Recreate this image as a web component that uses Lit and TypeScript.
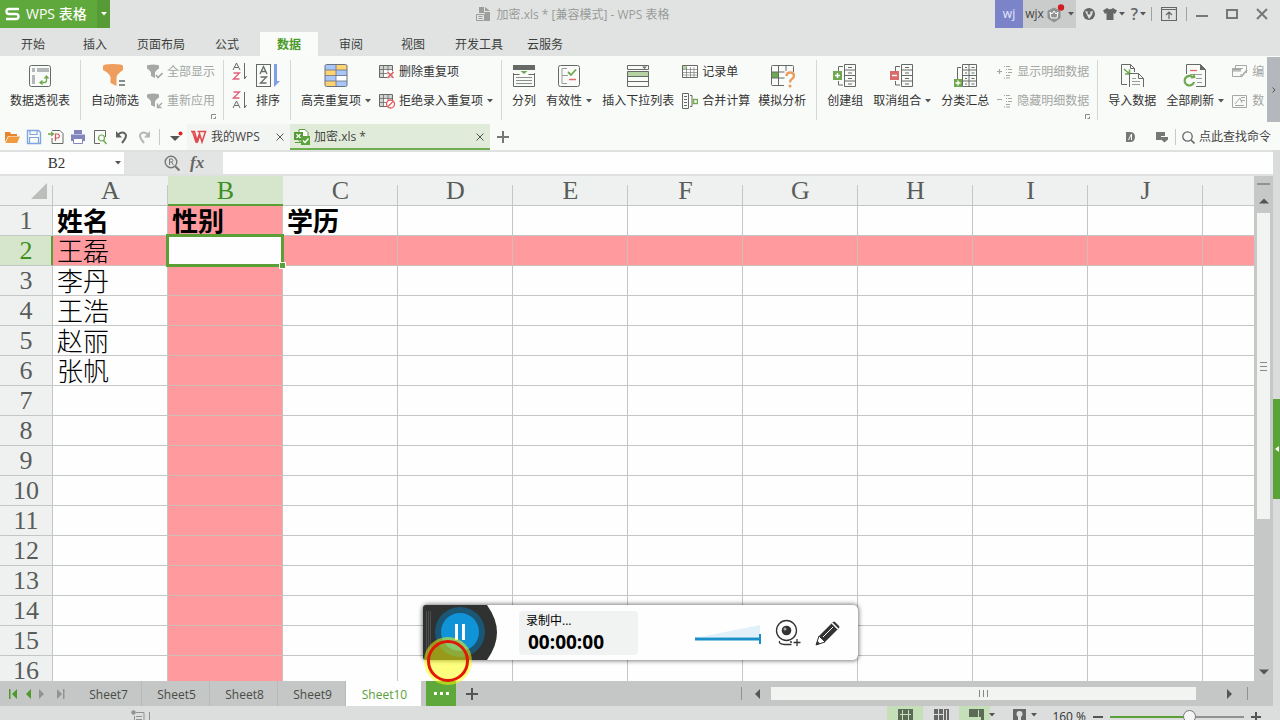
import { LitElement, html, css, svg, nothing, type TemplateResult } from "lit";
import { customElement, property } from "lit/decorators.js";
import { classMap } from "lit/directives/class-map.js";

const icon = (w: number, h: number, body: unknown) =>
  html`<svg width=${w} height=${h} viewBox="0 0 ${w} ${h}" fill="none" aria-hidden="true">${body}</svg>`;

const G = "#6fa84f";
const D = "#666a66";

const caret = () => icon(6, 4, svg`<path d="M0 0h6L3 3.5z" fill="#555"/>`);

/* ---------- large ribbon icons (26 x 26) ---------- */
const big: Record<string, TemplateResult> = {
  pivot: icon(26, 26, svg`<rect x="2.5" y="2.5" width="21" height="21" rx="2" stroke="${D}"/>
    <path d="M5 5h3v4H5zM10 5h12v4H10zM5 12h3v9H5z" fill="#b4b8b8"/>
    <path d="M14 19.500h3.500q2 0 2-2V14M15.500 17.500l-2.500 2 2.500 2M17.500 15.500l2-2.500 2 2.500" stroke="${G}" stroke-width="1.300"/>`),
  filter: icon(26, 26, svg`<path d="M1 3q0-2 10-2t10 2v4q-6 4-6.500 7v9l-6-3v-6Q7 10 1 7z" fill="#ee9d5c"/>
    <path d="M17 18h6M17 22h6" stroke="${D}" stroke-width="1.600"/>`),
  sort: icon(26, 26, svg`<rect x="1.500" y="1.500" width="14" height="22" stroke="${D}"/>
    <path d="M5 11l3.500-7.500L12 11M6.300 8.500h4.500M5.500 14h6l-6 6h6" stroke="${D}" stroke-width="1.300"/>
    <path d="M19 1h3v17h3l-6 6z" fill="#7f9fe4"/>`),
  highlight: icon(26, 26, svg`<rect x="2" y="1.500" width="22" height="22" rx="1.500" fill="#fff"/>
    <path d="M13 2h11v5H13zM2 7h11v6H2zM2 18h11v5H2z" fill="#ffd272"/>
    <path d="M2 2h11v5H2zM13 7h11v6H13zM2 13h11v5H2zM13 18h11v5H13z" fill="#a9c6fb"/>
    <rect x="2" y="1.500" width="22" height="22" rx="1.500" stroke="#6a7280"/>
    <path d="M2 7h22M2 12.500h22M2 18h22M13 2v22" stroke="#6a7280" stroke-width=".8"/>`),
  split: icon(26, 26, svg`<path d="M2 2h22v5H2z" fill="${D}"/><path d="M9.500 8h7L13 11z" fill="${G}"/>
    <path d="M2.500 10v13.500h21V10M2.500 11.500h6M17.500 11.500h6" stroke="${D}"/>
    <path d="M5 14.500h16M5 17.500h16M5 20.500h16" stroke="#8c908c"/>`),
  valid: icon(26, 26, svg`<rect x="2.500" y="2.500" width="21" height="21" rx="2" stroke="${D}"/>
    <path d="M11 5.500H6v15h5M6 12.500h6" stroke="#9a9e9a"/><path d="M12 9l3 3 5-5.500" stroke="${G}" stroke-width="1.800"/>
    <path d="M13 16.500h7" stroke="#e06a6a" stroke-width="1.500"/>`),
  dropList: icon(26, 26, svg`<path d="M2.500 2.500h21v4h-21z" stroke="${D}"/><path d="M17 3.500h5L19.500 6z" fill="${D}"/>
    <path d="M2 8.500h22v5H2z" fill="#b5d3a0"/><path d="M2.500 8.500h21v15h-21zM2.500 13.500h21M2.500 18.500h21" stroke="${D}"/>`),
  whatIf: icon(26, 26, svg`<path d="M2 9h8v6H2z" fill="${G}"/>
    <path d="M15 22.500H3.500q-1 0-1-1v-18q0-1 1-1h20q1 0 1 1V9M2.500 9h13M2.500 15h13M9.500 3v20M17 3v5" stroke="${D}"/>
    <path d="M17.500 13q0-3.500 3.700-3.500t3.700 3.300q0 2-2 3.200t-1.800 3.500" stroke="#eb9d5f" stroke-width="2.400"/><circle cx="21" cy="23" r="1.600" fill="#eb9d5f"/>`),
  group: icon(26, 26, svg`<path d="M12.500 1.500h11v22h-11zM12.500 7h11M12.500 12.500h11M12.500 18h11M16 4.500h4M16 10h4M16 15.500h4M16 21h4M11 3.500H6.500v5M11 22H6.500v-4" stroke="${D}"/>
    <path d="M1 8h9v9H1z" fill="${G}"/><path d="M3 12.500h5M5.500 10v5" stroke="#fff" stroke-width="1.400"/>`),
  ungroup: icon(26, 26, svg`<path d="M12.500 1.500h11v22h-11zM12.500 7h11M12.500 12.500h11M12.500 18h11M16 4.500h4M16 10h4M16 15.500h4M16 21h4M11 3.500H6.500v5M11 22H6.500v-4" stroke="${D}"/>
    <path d="M1 8h9v9H1z" fill="#d96b6b"/><path d="M3 12.500h5" stroke="#fff" stroke-width="1.400"/>`),
  subtotal: icon(26, 26, svg`<path d="M10.500 1.500h14v22h-14zM17 2v21M10.500 7h14M10.500 12.500h14M10.500 18h14M13 4.500h2M19.500 4.500h3M13 10h2M19.500 10h3M13 15.500h2M19.500 15.500h3M13 21h2M19.500 21h3M9 4.500H5.500V16" stroke="${D}"/>
    <path d="M2 16h8v8H2z" fill="${G}"/><path d="M3.500 20h5M6 17.500v5" stroke="#fff" stroke-width="1.300"/>`),
  importData: icon(26, 26, svg`<path d="M2.500 21.500v-20h9l4 4V9M11.500 1.500v4h4M8 21.500H2.500" stroke="${D}"/>
    <path d="M5 6l5 4.500M10.500 6.500V11H6" stroke="${G}" stroke-width="1.600"/>
    <path d="M10.500 24V10.500h9l5 5V24M19.500 10.500v5h5" stroke="${D}"/><path d="M13 15.500h4M13 18.500h8M13 21.500h8" stroke="#9a9e9a"/>`),
  refresh: icon(26, 26, svg`<path d="M4.500 11V1.500h14l5 5v17H14" stroke="${D}"/><path d="M18 1v6h6z" fill="${D}"/>
    <path d="M8 7.500h7" stroke="#e06a6a" stroke-width="1.300"/><path d="M8 11.500h12M14 15.500h6M15 19.500h5" stroke="#9a9e9a"/>
    <path d="M11 14.500A4.800 4.800 0 1 0 12 19" stroke="${G}" stroke-width="2.200"/><path d="M8.500 15.500l5-.5-1-4.500z" fill="${G}"/>`),
};

/* ---------- small ribbon icons (16 x 16) ---------- */
const funnel = svg`<path d="M0 2q0-1.500 6-1.500T12 2v2.500Q8 7 8 9v5l-4-2V9Q4 7 0 4.500z" fill="#a5a8a5"/>`;
const miniTable = svg`<path d="M.5 1.500h13v12H.5z" fill="#fff" stroke="${D}"/><path d="M1 2h12v3H1zM1 5h3v8H1z" fill="#d0d3d0"/>
  <path d="M.5 5.500h13M.5 9.500h13M4.500 2v11M9 2v11" stroke="${D}" stroke-width=".8"/>`;
const small: Record<string, TemplateResult> = {
  showAll: icon(16, 16, svg`${funnel}<path d="M9 11l2 2.500 4.500-4.500" stroke="#a5a8a5" stroke-width="1.600"/>`),
  reapply: icon(16, 16, svg`${funnel}<path d="M15 10l-4 4M10.500 10.500v4h4" stroke="#a5a8a5" stroke-width="1.400"/>`),
  asc: icon(16, 20, svg`<path d="M1 8l3.500-7L8 8M2.500 5.500h4" stroke="${D}"/><path d="M1.500 11h6l-6 6h6" stroke="#e0607c" stroke-width="1.300"/>
    <path d="M12.500 1v16M12.500 17l2-3" stroke="${D}"/>`),
  desc: icon(16, 20, svg`<path d="M1.500 1h6l-6 6h6" stroke="#e0607c" stroke-width="1.300"/><path d="M1 17l3.500-7L8 17M2.500 14.500h4" stroke="${D}"/>
    <path d="M12.500 1v16M12.500 17l2-3" stroke="${D}"/>`),
  dedupe: icon(16, 16, svg`${miniTable}<path d="M8 7h8v8H8z" fill="#fff" opacity=".7"/><path d="M8.500 8l6 6M14.500 8l-6 6" stroke="#df5b5b" stroke-width="1.400"/>`),
  reject: icon(16, 16, svg`${miniTable}<circle cx="11.500" cy="11" r="4" fill="#fff" stroke="#df5b5b" stroke-width="1.300"/><path d="M9 13.500l5-5" stroke="#df5b5b" stroke-width="1.300"/>`),
  form: icon(16, 16, svg`<path d="M.5 1.500h15v12H.5z" fill="#fff" stroke="${D}"/><path d="M1 2h4v3H1z" fill="#b5d3a0"/>
    <path d="M.5 5.500h15M.5 8.500h15M.5 11h15M4.500 3v10M8.500 3v10M12 3v10" stroke="${D}" stroke-width=".6"/>`),
  consolidate: icon(16, 16, svg`<path d="M.5.5h6v15h-6zM2 3.500h3M2 6.500h3M2 9.500h3M2 12.500h3M8 2.500h2v11H8" stroke="${D}"/>
    <rect x="11.500" y="6.500" width="4" height="4" stroke="${G}" stroke-width="1.400"/>`),
  expand: icon(16, 16, svg`<path d="M0 7.500h5M2.500 5v5M9 2.500h4M9 5.500h1M11 5.500h4M9 8.500h1M11 8.500h4M9 11.500h4M9 14h4M7 2.500h1M7 14h1" stroke="#a5a8a5" stroke-width="1.200"/>`),
  collapse: icon(16, 16, svg`<path d="M0 6.500h5M9 2.500h4M9 5.500h1M11 5.500h4M9 8.500h1M11 8.500h4M9 11.500h4M9 14h4M7 2.500h1M7 14h1" stroke="#a5a8a5" stroke-width="1.200"/>`),
  edit: icon(16, 16, svg`<path d="M3.500 4V1.500h11V9M11 4.500H.5v8H9V10M.5 7H9" stroke="#a5a8a5"/><path d="M.5 4.500H9v2H.5z" fill="#a5a8a5"/><path d="M15 6l-6 7" stroke="#a5a8a5" stroke-width="1.600"/>`),
  props: icon(16, 16, svg`<path d="M.5 2.500h14v12H.5zM3 11l5-6 2 5M9 4.500h4M9 7.500h4M3 12.500h9" stroke="#a5a8a5"/>`),
};

/* ---------- quick access toolbar ---------- */
const quick: [string, TemplateResult][] = [
  ["打开", icon(16, 16, svg`<path d="M1 13V3h5l1 2h6v2H4L1 13z" fill="#e8842c"/><path d="M4.500 7.500H16L13 14H1.500z" fill="#f19a3e"/>`)],
  ["保存", icon(16, 16, svg`<path d="M1.500 1.500h11l2 2v11h-13z" stroke="#7fa5e0" stroke-width="1.400"/><path d="M4 1.500h7v4H4zM3.500 8.500h9v6h-9z" stroke="#7fa5e0" stroke-width="1.200"/>`)],
  ["输出为PDF", icon(16, 16, svg`<path d="M4 1.500h8l3 3v10H4V9" stroke="${D}"/><path d="M7.500 12V5h2.500q3 2 0 4H6.500" stroke="#d85a62" stroke-width="1.200"/><path d="M0 5h5M3 3l2.500 2L3 7" stroke="${G}" stroke-width="1.300"/>`)],
  ["打印", icon(16, 16, svg`<path d="M4 1h8v4H4zM1 5.500h14V12H1z" fill="#8286bd"/><path d="M3.500 9.500h9v5h-9z" fill="#fff" stroke="#8286bd"/>`)],
  ["打印预览", icon(16, 16, svg`<path d="M8 14.500H2.500v-13h11V8" stroke="${D}"/><circle cx="9.500" cy="9" r="3" stroke="${G}" stroke-width="1.200"/><path d="M11.500 11.500l3 3.500" stroke="${G}" stroke-width="1.400"/>`)],
  ["撤销", icon(16, 16, svg`<path d="M4 5.500Q8 2 11 4.500T8 14" stroke="#5f6360" stroke-width="2"/><path d="M2 2v6.500h6z" fill="#5f6360"/>`)],
  ["恢复", icon(16, 16, svg`<path d="M12 5.500Q8 2 5 4.500T8 14" stroke="#b4b7b4" stroke-width="2"/><path d="M14 2v6.500H8z" fill="#b4b7b4"/>`)],
];

const closeX = icon(8, 8, svg`<path d="M.5.500l7 7M7.500.500l-7 7" stroke="#555"/>`);
const plus = (s: number, c: string) => icon(s, s, svg`<path d="M0 ${s / 2}h${s}M${s / 2} 0v${s}" stroke="${c}" stroke-width="2"/>`);
const arrow = (d: string, c: string) => icon(10, 10, svg`<path d="${d}" fill="${c}"/>`);

type Item =
  | { kind: "big"; icon: string; label: string; menu?: boolean }
  | { kind: "small"; rows: { icon: string; label?: string; menu?: boolean; off?: boolean }[] };

const ribbon: { launcher?: boolean; items: Item[] }[] = [
  { items: [{ kind: "big", icon: "pivot", label: "数据透视表" }] },
  {
    launcher: true,
    items: [
      { kind: "big", icon: "filter", label: "自动筛选" },
      { kind: "small", rows: [{ icon: "showAll", label: "全部显示", off: true }, { icon: "reapply", label: "重新应用", off: true }] },
    ],
  },
  {
    items: [
      { kind: "small", rows: [{ icon: "asc" }, { icon: "desc" }] },
      { kind: "big", icon: "sort", label: "排序" },
    ],
  },
  {
    items: [
      { kind: "big", icon: "highlight", label: "高亮重复项", menu: true },
      { kind: "small", rows: [{ icon: "dedupe", label: "删除重复项" }, { icon: "reject", label: "拒绝录入重复项", menu: true }] },
    ],
  },
  {
    items: [
      { kind: "big", icon: "split", label: "分列" },
      { kind: "big", icon: "valid", label: "有效性", menu: true },
      { kind: "big", icon: "dropList", label: "插入下拉列表" },
      { kind: "small", rows: [{ icon: "form", label: "记录单" }, { icon: "consolidate", label: "合并计算" }] },
      { kind: "big", icon: "whatIf", label: "模拟分析" },
    ],
  },
  {
    launcher: true,
    items: [
      { kind: "big", icon: "group", label: "创建组" },
      { kind: "big", icon: "ungroup", label: "取消组合", menu: true },
      { kind: "big", icon: "subtotal", label: "分类汇总" },
      { kind: "small", rows: [{ icon: "expand", label: "显示明细数据", off: true }, { icon: "collapse", label: "隐藏明细数据", off: true }] },
    ],
  },
  {
    items: [
      { kind: "big", icon: "importData", label: "导入数据" },
      { kind: "big", icon: "refresh", label: "全部刷新", menu: true },
      { kind: "small", rows: [{ icon: "edit", label: "编", off: true }, { icon: "props", label: "数", off: true }] },
    ],
  },
];

const base = css`
  * { box-sizing: border-box; }
  button, input {
    font: inherit; color: inherit; background: none; border: 0; padding: 0; margin: 0; border-radius: 0;
  }
  button { display: flex; align-items: center; justify-content: center; white-space: nowrap; }
  svg { display: block; flex: none; }
`;

@customElement("title-bar")
export class TitleBar extends LitElement {
  static styles = [base, css`
    :host { display: flex; height: 28px; padding-right: 3px; }
    .brand { display: flex; background: #5fa83b; color: #fff; font-size: 14px; font-weight: 500; }
    .brand .name { gap: 6px; width: 97px; padding-left: 5px; justify-content: flex-start; }
    .brand .more { width: 13px; background: #569b35; }
    .caption { flex: 1; display: flex; align-items: center; justify-content: center; gap: 6px; padding: 1px 0 0 40px; color: #989b98; min-width: 0; white-space: nowrap; }
    .avatar { width: 28px; background: #7b84c8; color: #e6e8ff; }
    .user { width: 53px; gap: 3px; background: #cacccb; color: #444; }
    .tool { width: 25px; gap: 2px; color: #666; font-size: 16px; font-weight: 600; }
    .pin { width: 34px; }
    .win { width: 30px; }
    .bar { width: 1px; height: 14px; margin: auto 0; background: #a0a3a0; }
  `];
  render() {
    return html`
      <div class="brand">
        <button class="name">${icon(15, 14, svg`<path d="M14 2H4Q1.500 2 1.500 4.500T4 7h7q2.500 0 2.500 2.500T11 12H1" stroke="#fff" stroke-width="2.400"/>`)}WPS 表格</button>
        <button class="more" aria-label="菜单">${icon(6, 4, svg`<path d="M0 0h6L3 3.500z" fill="#fff"/>`)}</button>
      </div>
      <div class="caption">
        ${icon(15, 15, svg`<path d="M3 0h5v5h6v9H9V6H3z" fill="#9b9e9b"/><path d="M9 0l5 4H9z" fill="#9b9e9b"/><path d="M.5 7.500h8v6h-8zM2.500 9.500h4M2.500 11.500h4" stroke="#9b9e9b" fill="#e1e3e1"/>`)}
        <span>加密.xls * [兼容模式] - WPS 表格</span>
      </div>
      <button class="avatar">wj</button>
      <button class="user">wjx
        ${icon(18, 20, svg`<path d="M7 4l6 3v7l-6 4-6-4V7z" fill="#8f9290" stroke="#8f9290"/><path d="M3 8l2 2 2-3 2 3 2-2-1 6H4z" stroke="#fff"/><circle cx="14" cy="3.500" r="3.200" fill="#cf1f22"/>`)}
        ${caret()}</button>
      <button class="tool" aria-label="皮肤">${icon(14, 14, svg`<circle cx="7" cy="7" r="6" fill="#666"/><path d="M3 4l4 1 4-1-1 4-3 4-2-4z" fill="#e1e3e1"/><circle cx="7" cy="6" r="1.500" fill="#666"/>`)}</button>
      <button class="tool" aria-label="换肤">${icon(14, 12, svg`<path d="M4 0q3 2.500 6 0l4 2.500-2 3.500-1.500-1v7h-7V5L2 6 0 2.500z" fill="#666"/>`)}${caret()}</button>
      <button class="tool"><span>?</span>${caret()}</button>
      <span class="bar"></span>
      <button class="pin" aria-label="功能区">${icon(16, 14, svg`<path d="M.5.500h15v13H.5zM.5 2.500h15M8 12V5M5 8l3-3 3 3" stroke="#666" stroke-width="1.200"/>`)}</button>
      <span class="bar"></span>
      <button class="win" aria-label="最小化">${icon(12, 12, svg`<path d="M0 8h12" stroke="#777" stroke-width="2"/>`)}</button>
      <button class="win" aria-label="还原">${icon(12, 12, svg`<path d="M1 2h10v8H1z" stroke="#777" stroke-width="2"/>`)}</button>
      <button class="win" aria-label="关闭">${icon(12, 12, svg`<path d="M1 1l10 10M11 1L1 11" stroke="#777" stroke-width="2"/>`)}</button>
    `;
  }
}

@customElement("ribbon-bar")
export class RibbonBar extends LitElement {
  static styles = [base, css`
    :host { display: block; }
    .tabs { display: flex; gap: 4px; height: 28px; padding: 4px 4px 0; }
    .tab { min-width: 58px; padding: 2px 9px 0; color: #3c3f3c; }
    .tab.on { background: #fafcf9; color: #4c9a2a; font-weight: 700; }
    .panel { display: flex; height: 68px; background: #f9fbf9; overflow: hidden; }
    .groups { display: flex; flex: 1; min-width: 0; overflow: hidden; padding-top: 1px; }
    .group { position: relative; display: flex; flex: none; padding: 0 6px 0 5px; background: linear-gradient(#d5d8d5, #d5d8d5) right 3px / 1px 60px no-repeat; }
    .group:last-child { background: none; }
    .big { flex-direction: column; justify-content: flex-start; gap: 3px; padding: 6px 5px 0; color: #333; }
    .big > svg { margin: 0 -4px; }
    .line { display: flex; align-items: center; gap: 4px; line-height: 18px; }
    .col { display: flex; flex-direction: column; padding: 0 3px; }
    .small { height: 29px; gap: 4px; justify-content: flex-start; color: #333; }
    .off { color: #a3a6a3; }
    .launch { position: absolute; right: 8px; bottom: 5px; }
    .next { width: 13px; margin-top: 1px; background: #b4b8bd; height: 65px; }
  `];
  render() {
    const tabs = ["开始", "插入", "页面布局", "公式", "数据", "审阅", "视图", "开发工具", "云服务"];
    return html`
      <nav class="tabs">
        ${tabs.map((t) => html`<button class=${classMap({ tab: true, on: t === "数据" })}>${t}</button>`)}
      </nav>
      <div class="panel">
        <div class="groups">
          ${ribbon.map((g) => html`<div class="group">
            ${g.items.map((it) => it.kind === "big"
              ? html`<button class="big">${big[it.icon]}<span class="line">${it.label}${it.menu ? caret() : nothing}</span></button>`
              : html`<div class="col">${it.rows.map((r) => html`
                  <button class=${classMap({ small: true, off: !!r.off })} aria-label=${r.label ?? r.icon}>${small[r.icon]}${r.label ?? nothing}${r.menu ? caret() : nothing}</button>`)}</div>`)}
            ${g.launcher ? html`<button class="launch" aria-label="更多">${icon(5, 5, svg`<path d="M.5 5V.5H5M2.500 4.500h2v-2" stroke="#888"/>`)}</button>` : nothing}
          </div>`)}
        </div>
        <button class="next" aria-label="向右滚动">${icon(4, 6, svg`<path d="M.5.500l2.500 2.500-2.500 2.500" stroke="#555"/>`)}</button>
      </div>
    `;
  }
}

@customElement("document-bar")
export class DocumentBar extends LitElement {
  static styles = [base, css`
    :host { display: flex; height: 26px; background: #f9fbf9; color: #444; }
    .quick { display: flex; align-items: center; gap: 6px; padding: 0 7px 0 4px; }
    .bar { width: 1px; height: 16px; margin: auto 0; background: #c8cac8; }
    .more { width: 27px; padding-left: 4px; }
    .doc { display: flex; align-items: center; gap: 4px; padding: 0 6px 0 4px; background: #f3f5f3; width: 103px; }
    .doc.on { width: 200px; padding-top: 2px; background: #e0ecd9; border-bottom: 2px solid #6fae50; }
    .doc .label { flex: 1; white-space: nowrap; }
    .add { width: 26px; }
    .tools { display: flex; align-items: center; margin-left: auto; padding-right: 9px; gap: 6px; }
    .tools button { gap: 4px; }
    .tools .gap { gap: 20px; }
  `];
  render() {
    return html`
      <div class="quick">${quick.map(([n, i]) => html`<button aria-label=${n}>${i}</button>`)}</div>
      <span class="bar"></span>
      <button class="more" aria-label="自定义">${icon(14, 12, svg`<path d="M1 5h10l-5 5z" fill="#555"/><circle cx="11.500" cy="2.500" r="2" fill="#e02020"/>`)}</button>
      <div class="doc">
        ${icon(16, 14, svg`<path d="M0 1.500h3.500L6 11l2.500-7.500L11 12l3.500-10.500H6.500M1.500 1.500L5 12h1.500L9 4" stroke="#e2474c" stroke-width="1.500"/>`)}
        <span class="label">我的WPS</span><button aria-label="关闭">${closeX}</button>
      </div>
      <div class="doc on">
        ${icon(16, 16, svg`<path d="M5 .500h6l3 3V12H5z" fill="#fff" stroke="#5c9a3f"/><path d="M0 3h9v8H0z" fill="#4f9a32"/><path d="M2.500 5l4 4M6.500 5l-4 4" stroke="#fff" stroke-width="1.300"/><path d="M1 13.500h6" stroke="#5c9a3f"/><path d="M7 7h9v9H7z" fill="#5aa53b"/><path d="M9 11.500l2 2 3.500-4" stroke="#fff" stroke-width="1.500"/>`)}
        <span class="label">加密.xls *</span><button aria-label="关闭">${closeX}</button>
      </div>
      <button class="add" aria-label="新建">${plus(12, "#777")}</button>
      <div class="tools">
        <button class="gap" aria-label="窗口">${icon(10, 12, svg`<path d="M1 1h4q5 0 5 5t-5 5H1z" fill="#777"/><path d="M3.500 9L6.500 3v6" stroke="#fff"/>`)}${icon(14, 12, svg`<path d="M1 1h9v4H6v4H1z" fill="#777"/><path d="M6 6h7v2.500L9.500 11.500 6 8.500z" fill="#777"/>`)}</button>
        <span class="bar"></span>
        <button>${icon(13, 13, svg`<circle cx="5.500" cy="5.500" r="4.700" stroke="#666" stroke-width="1.300"/><path d="M9 9l3.500 3.500" stroke="#666" stroke-width="1.600"/>`)}点此查找命令</button>
      </div>
    `;
  }
}

@customElement("sheet-grid")
export class SheetGrid extends LitElement {
  @property({ type: Number }) activeRow = 2;
  @property({ type: Number }) activeCol = 1;
  static styles = [base, css`
    :host { display: flex; min-height: 0; flex: 1; }
    .view { flex: 1; min-width: 0; overflow: hidden; background: #fdfefd; }
    table { table-layout: fixed; width: 1318px; border-collapse: separate; border-spacing: 0; }
    .head { width: 53px; }
    .cell { width: 115px; }
    th, td { height: 30px; padding: 1px 0 0; white-space: nowrap; border-bottom: 1px solid #c3c6c3; }
    th { font: 400 26px/28px "Liberation Serif", serif; color: #5a5c5a; text-align: center; background: linear-gradient(#c3c6c3, #c3c6c3) right bottom / 1px 20px no-repeat #eef1ef; }
    th.row { border-right: 1px solid #c3c6c3; background: #eef1ef; }
    thead th.lit { background: #d5e6cc; color: #3f8f22; border-color: #5ba037; box-shadow: inset 0 -1px #5ba037; }
    th.row.lit { background: #d5e6cc; color: #3f8f22; border-right-color: #5ba037; box-shadow: inset -1px 0 #5ba037; }
    td { border-right: 1px solid #c3c6c3; padding-left: 4px; font-size: 26px; line-height: 28px; font-weight: 300; color: #000; }
    td.bold { font-weight: 700; }
    td.pink { background: #ff9b9f; border-color: #cfbdb6; }
    td.active { position: relative; background: #fdfefd; }
    .frame { position: absolute; inset: -2px; border: 3px solid #5ba037; }
    .frame::after { content: ""; position: absolute; right: -4px; bottom: -4px; width: 5px; height: 5px; background: #5ba037; outline: 1px solid #fff; }
    .corner { display: flex; justify-content: flex-end; padding-right: 6px; }
    .scroll { width: 19px; display: flex; flex-direction: column; align-items: center; background: #c5c8c6; padding: 7px 0 4px; }
    .splitter { width: 13px; height: 2px; background: #909390; }
    .scroll button { height: 28px; width: 19px; padding-top: 3px; }
    .scroll .down { height: 10px; margin-top: auto; padding: 0; }
    .thumb { width: 13px; flex: 0 0 62%; display: flex; align-items: center; justify-content: center; background: #f2f4f2; }
  `];
  render() {
    const cols = [..."ABCDEFGHIJ", ""];
    const data = [["姓名", "性别", "学历"], ["王磊"], ["李丹"], ["王浩"], ["赵丽"], ["张帆"]];
    return html`
      <div class="view">
        <table>
          <colgroup><col class="head" />${cols.map(() => html`<col class="cell" />`)}</colgroup>
          <thead><tr>
            <th><div class="corner">${icon(16, 16, svg`<path d="M16 0v16H0z" fill="#bbbebb"/>`)}</div></th>
            ${cols.map((c, i) => html`<th class=${classMap({ lit: i === this.activeCol })}>${c}</th>`)}
          </tr></thead>
          <tbody>
            ${Array.from({ length: 16 }, (_, r) => html`<tr>
              <th class=${classMap({ row: true, lit: r + 1 === this.activeRow })}>${r + 1}</th>
              ${cols.map((_c, i) => {
                const inRow = r + 1 === this.activeRow, inCol = i === this.activeCol;
                return html`<td class=${classMap({ bold: r === 0, pink: inRow !== inCol, active: inRow && inCol })}>${data[r]?.[i] ?? nothing}${inRow && inCol ? html`<span class="frame"></span>` : nothing}</td>`;
              })}
            </tr>`)}
          </tbody>
        </table>
      </div>
      <div class="scroll">
        <span class="splitter"></span>
        <button aria-label="向上">${arrow("M0 7.500h10L5 2.500z", "#555")}</button>
        <div class="thumb">${icon(7, 9, svg`<path d="M0 .500h7M0 4.500h7M0 8.500h7" stroke="#888"/>`)}</div>
        <button class="down" aria-label="向下">${arrow("M0 2.500h10l-5 5z", "#555")}</button>
      </div>
    `;
  }
}

@customElement("screen-recorder")
export class ScreenRecorder extends LitElement {
  static styles = [base, css`
    :host { display: flex; align-items: center; width: 435px; height: 55px; border-radius: 5px; background: #fefefe; box-shadow: 0 0 4px 1px rgba(0, 0, 0, .5); color: #000; padding-right: 17px; }
    .time { width: 119px; height: 44px; margin-left: 22px; padding: 1px 7px; border-radius: 4px; background: #f1f2f2; line-height: 18px; }
    .clock { font-size: 19px; font-weight: 700; line-height: 24px; padding-left: 2px; }
    .right { display: flex; align-items: center; gap: 14px; margin-left: auto; }
    .pointer { position: absolute; left: 1px; top: 32px; width: 48px; height: 48px; border-radius: 50%; background: rgba(255, 255, 0, .5); padding: 3px; }
    .ring { height: 42px; border-radius: 50%; border: 3px solid #e01808; }
  `];
  render() {
    return html`
      <button aria-label="暂停">${icon(74, 55, svg`<path d="M3 0h61q10 14 10 27.500T64 55H3Q0 55 0 52V3Q0 0 3 0z" fill="#303232"/>
        <path d="M3.500 6v44M5.500 6v44M7.500 6v44" stroke="#555" stroke-width=".8"/>
        <circle cx="37" cy="27" r="25" fill="#1b5674"/><circle cx="37" cy="27" r="19" fill="#1193d8"/>
        <path d="M33.500 19v16M40.500 19v16" stroke="#fff" stroke-width="3"/>`)}</button>
      <div class="time"><div>录制中...</div><div class="clock">00:00:00</div></div>
      <div class="right">
        ${icon(66, 24, svg`<path d="M0 17L65 4v12H0z" fill="#e2f0f9"/><path d="M0 18h65" stroke="#1a8fc9" stroke-width="3"/><path d="M65 13v10" stroke="#1a8fc9" stroke-width="2"/>`)}
        <button aria-label="摄像头">${icon(26, 28, svg`<circle cx="11.500" cy="11.500" r="10" stroke="#333" stroke-width="1.300"/><circle cx="11.500" cy="11.500" r="4.800" fill="#333"/><circle cx="10" cy="10" r="1.500" fill="#aaa"/><path d="M4.500 22q-1 3 5 3.500h7M15 23l2 0M18.500 23.500h7M22 20v7" stroke="#333" stroke-width="1.300"/>`)}</button>
        <button aria-label="画笔">${icon(26, 26, svg`<path d="M1 25l3-9L18 2q1-1 2 0l4 4q1 1 0 2L10 22z" fill="#333"/><path d="M1 25l3-9 6 6z" fill="#fff" stroke="#333"/><path d="M17 3l6 6" stroke="#fff" stroke-width="1.500"/><path d="M8 17L18 7" stroke="#fff"/><path d="M1 25l1.500-4 2.500 2.500z" fill="#333"/>`)}</button>
      </div>
      <div class="pointer"><div class="ring"></div></div>
    `;
  }
}

@customElement("app-root")
export class AppRoot extends LitElement {
  static styles = [base, css`
    :host { display: flex; flex-direction: column; position: relative; height: 100vh; min-height: 480px; overflow: hidden; background: #e1e3e2; color: #333; font: 12px/18px "Open Sans", "Noto Sans CJK SC", sans-serif; }
    .body { flex: 1; display: flex; min-height: 0; }
    .work { flex: 1; min-width: 0; display: flex; flex-direction: column; }
    .formula { display: flex; height: 26px; padding: 2px 0; background: #dfe1e0; }
    .namebox { display: flex; align-items: center; width: 124px; background: #fdfefd; padding-right: 3px; }
    .namebox input { flex: 1; min-width: 0; height: 100%; padding: 1px 2px 0 0; text-align: center; font: 15px/18px "Liberation Serif", serif; }
    .fx { display: flex; align-items: center; gap: 10px; width: 99px; padding-left: 40px; background: #e3e5e4; font: italic 700 17px/20px "Liberation Serif", serif; color: #666; }
    .entry { flex: 1; background: #fdfefd; }
    .entry input { width: 100%; height: 100%; }
    .side { width: 7px; background: #dadcdb; display: flex; flex-direction: column; justify-content: center; }
    .side button { height: 100px; margin-top: 42px; background: #5aa336; }
    .sheets { display: flex; height: 25px; background: #c4c7c5; }
    .nav { display: flex; align-items: center; width: 74px; padding-left: 8px; }
    .nav .first { margin-right: 7px; }
    .nav .next { margin: 0 9px 0 2px; }
    .sheet { width: 68px; padding: 2px 0 0 2px; border-right: 1px solid #b7bab8; color: #484b48; }
    .sheet.on { width: 75px; background: #fdfefd; color: #5a9e3a; border: 0; }
    .list { width: 30px; margin-left: 5px; background: #5fa83b; }
    .add { width: 32px; }
    .hscroll { display: flex; align-items: center; width: 42%; margin-left: auto; padding: 0 25px 0 3px; }
    .hscroll .bar { width: 1px; height: 13px; background: #8f9290; }
    .hscroll .track { flex: 1; height: 13px; }
    .hscroll .thumb { width: 95%; height: 13px; display: flex; align-items: center; justify-content: center; background: #f2f4f2; }
    .arrow { width: 29px; }
    .arrow.right { padding-right: 7px; }
    .status { display: flex; align-items: flex-start; height: 14px; overflow: hidden; background: #dcdedd; padding: 0 19px 0 131px; }
    .mark { margin-right: auto; padding-top: 4px; }
    .modes { display: flex; }
    .mode { height: 14px; width: 36px; gap: 5px; padding-top: 4px; }
    .mode.menu { width: 44px; justify-content: flex-start; padding-left: 10px; }
    .mode.on { background: linear-gradient(#c5dfb8, #c5dfb8) left / 36px 100% no-repeat; }
    .mode.menu.on { background-size: 31px 100%; }
    .zoom { display: flex; align-items: center; gap: 7px; height: 21px; }
    .zoom label { padding-left: 5px; }
    .zoom input { appearance: none; width: 134px; height: 14px; background: linear-gradient(90deg, #5ba037 58%, #8f9290 58%) center / 100% 2px no-repeat; }
    .zoom input::-webkit-slider-thumb { appearance: none; width: 13px; height: 13px; border-radius: 50%; background: #f4f5f4; border: 1px solid #777; }
    screen-recorder { position: absolute; left: 423px; bottom: 60px; }
  `];
  render() {
    const g = "#4b9a2a", o = "#909390";
    return html`
      <title-bar></title-bar>
      <ribbon-bar></ribbon-bar>
      <document-bar></document-bar>
      <div class="body">
        <main class="work">
          <div class="formula">
            <div class="namebox"><input aria-label="名称框" value="B2" />${caret()}</div>
            <div class="fx">${icon(16, 16, svg`<circle cx="7" cy="7" r="5.800" stroke="#777" stroke-width="1.400"/><path d="M11 11l4.500 4.500" stroke="#777" stroke-width="2.200"/><path d="M5.500 10V4h2.500q2 1.500 0 3H5.500M7.500 7l2 3" stroke="#777"/>`)}<span>fx</span></div>
            <div class="entry"><input aria-label="编辑栏" /></div>
          </div>
          <sheet-grid></sheet-grid>
          <div class="sheets">
            <div class="nav">
              <button class="first" aria-label="第一张">${arrow("M1 0h1.500v10H1zM9 0v10L4 5z", g)}</button>
              <button aria-label="前一张">${arrow("M6 0v10L1 5z", g)}</button>
              <button class="next" aria-label="下一张">${arrow("M2 0v10l5-5z", o)}</button>
              <button aria-label="最后一张">${arrow("M1 0v10l5-5zM7 0h1.500v10H7z", o)}</button>
            </div>
            ${["Sheet7", "Sheet5", "Sheet8", "Sheet9", "Sheet10"].map((s) => html`<button class=${classMap({ sheet: true, on: s === "Sheet10" })}>${s}</button>`)}
            <button class="list" aria-label="工作表列表">${icon(15, 3, svg`<path d="M0 0h3v3H0zM6 0h3v3H6zM12 0h3v3h-3z" fill="#fff"/>`)}</button>
            <button class="add" aria-label="新建工作表">${plus(12, "#555")}</button>
            <div class="hscroll">
              <span class="bar"></span>
              <button class="arrow" aria-label="向左">${arrow("M8 0v10L3 5z", "#555")}</button>
              <div class="track"><div class="thumb">${icon(9, 7, svg`<path d="M.500 0v7M4.500 0v7M8.500 0v7" stroke="#888"/>`)}</div></div>
              <button class="arrow right" aria-label="向右">${arrow("M3 0v10l5-5z", "#555")}</button>
              <span class="bar"></span>
            </div>
          </div>
        </main>
        <aside class="side"><button aria-label="展开窗格">${icon(4, 6, svg`<path d="M4 0v6L0 3z" fill="#fff"/>`)}</button></aside>
      </div>
      <footer class="status">
        <span class="mark">${icon(20, 16, svg`<circle cx="2.500" cy="2.500" r="2.200" fill="#909390"/><path d="M5 2.500h8V16M3.500 6v10M5 6.500h6M5 9.500h6M18.500 2v14" stroke="#909390"/>`)}</span>
        <div class="modes">
          <button class="mode on" aria-label="普通视图">${icon(15, 12, svg`<path d="M0 0h15v12H0z" fill="#5c6b58"/><path d="M2 5.500h11M4.500 1v10M10.500 1v10" stroke="#c5dfb8"/>`)}</button>
          <button class="mode" aria-label="分页预览">${icon(15, 12, svg`<path d="M0 0h4v5H0zM5 0h4v5H5zM10 0h5v12h-5zM0 6h4v5H0zM5 6h4v5H5z" fill="#666"/><path d="M12.500 1v10" stroke="#dcdedd"/>`)}</button>
          <button class="mode menu on" aria-label="阅读模式">${icon(15, 12, svg`<path d="M0 0h15v12h-3V8H0z" fill="#5c6b58"/><path d="M9.500 1v7" stroke="#c5dfb8"/>`)}${caret()}</button>
          <button class="mode menu" aria-label="护眼模式">${icon(13, 12, svg`<path d="M0 0h13v12H0z" fill="#666"/><circle cx="6.500" cy="5" r="3" fill="#dcdedd"/><path d="M5 7h3v4H5z" fill="#dcdedd"/>`)}${caret()}</button>
        </div>
        <div class="zoom">
          <label for="zoom">160 %</label>
          <button aria-label="缩小">${icon(10, 10, svg`<path d="M0 5h10" stroke="#555" stroke-width="2"/>`)}</button>
          <input id="zoom" type="range" min="0" max="100" value="60" />
          <button aria-label="放大">${plus(10, "#555")}</button>
        </div>
      </footer>
      <screen-recorder></screen-recorder>
    `;
  }
}
